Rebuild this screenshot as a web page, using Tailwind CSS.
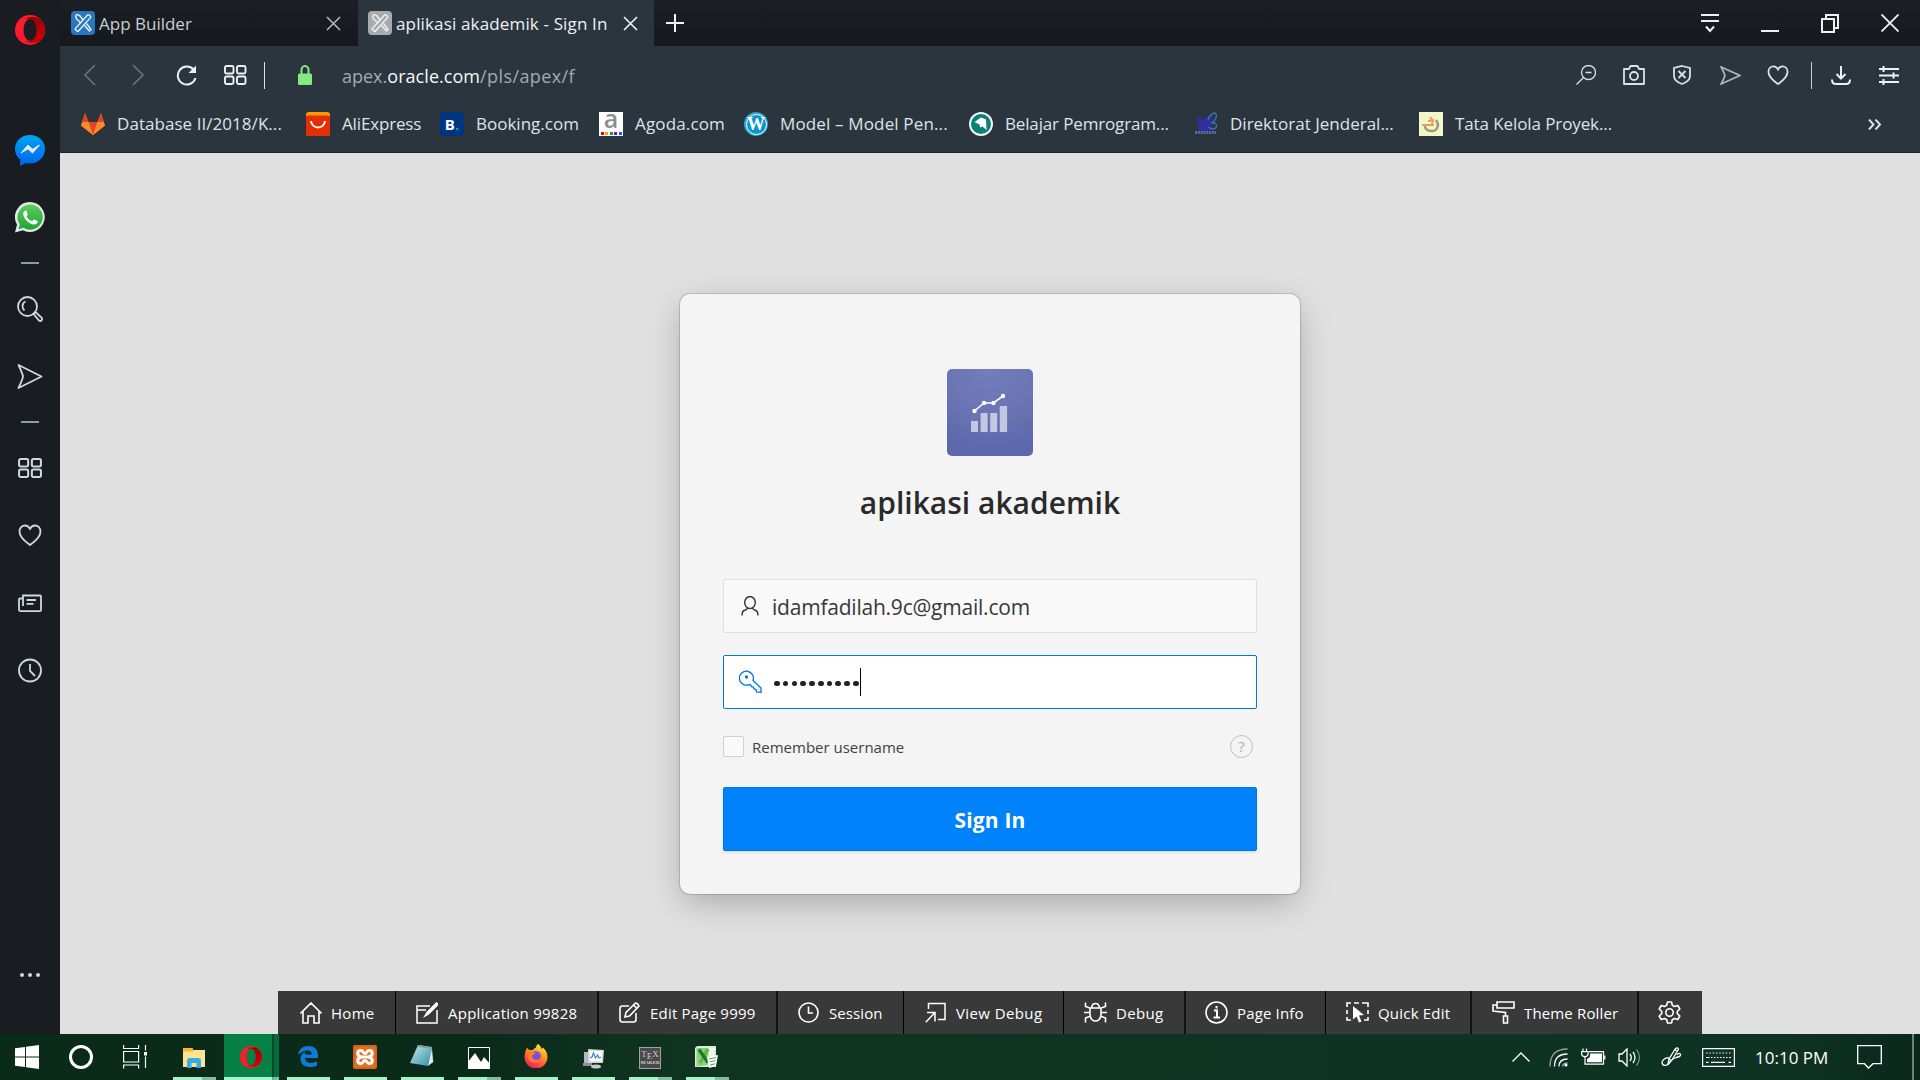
<!DOCTYPE html>
<html lang="id">
<head>
<meta charset="utf-8">
<title>aplikasi akademik - Sign In</title>
<script src="https://cdn.jsdelivr.net/npm/@tailwindcss/browser@4"></script>
</head>
<body class="flex h-[1080px] w-[1920px] flex-col overflow-hidden bg-[#e0e0e0] font-['Open_Sans',sans-serif]">
<svg class="absolute h-0 w-0" aria-hidden="true">
  <defs>
    <linearGradient id="opA" x1="0" y1="0" x2="0" y2="1"><stop offset="0" stop-color="#ff1b2d"/><stop offset="1" stop-color="#fa1a2c"/></linearGradient>
    <linearGradient id="opB" x1="0" y1="0" x2="0" y2="1"><stop offset="0" stop-color="#9c0000"/><stop offset="1" stop-color="#d0000c"/></linearGradient>
    <linearGradient id="msg" x1="0" y1="0" x2="0" y2="1"><stop offset="0" stop-color="#00a6f2"/><stop offset="1" stop-color="#0062ee"/></linearGradient>
    <linearGradient id="wa" x1="0" y1="0" x2="0" y2="1"><stop offset="0" stop-color="#5ccb5f"/><stop offset="1" stop-color="#1fa634"/></linearGradient>
    <linearGradient id="np" x1="0" y1="0" x2="1" y2="1"><stop offset="0" stop-color="#c6e9ee"/><stop offset="1" stop-color="#2e8fa5"/></linearGradient>
    <linearGradient id="ff" x1="0.8" y1="0" x2="0.3" y2="1"><stop offset="0" stop-color="#fff04a"/><stop offset="0.4" stop-color="#ff9a1e"/><stop offset="0.75" stop-color="#ff4a3d"/><stop offset="1" stop-color="#e5206c"/></linearGradient>
    <g id="apex"><g fill="none" stroke="#f2f5f7" stroke-width="1.300"><rect x="-2" y="-10" width="4" height="20" rx="1" transform="translate(12 12) rotate(42)"/><path d="M4.500 4.500l1.500-1 3 1.300 3 4.200M4.500 4.500l1 3.500 4.500 4M13.500 14.500l5 5.500 1.500-1.500-4.500-6"/></g></g>
    <g id="opera"><ellipse cx="15" cy="15" rx="15" ry="15" fill="url(#opA)"/><path d="M10 4.500C13 1.500 20 .5 25 4A14.800 14.800 0 0 1 25 26C20 29.500 13 28.500 10 25.500 14 28 20.500 25 20.500 15S14 2 10 4.500z" fill="url(#opB)"/></g>
    <g id="grid"><rect x="1" y="1" width="8.500" height="7.500" rx="1.500"/><rect x="13" y="1" width="8.500" height="7.500" rx="1.500"/><rect x="1" y="11.500" width="8.500" height="7.500" rx="1.500"/><rect x="13" y="11.500" width="8.500" height="7.500" rx="1.500"/></g>
    <path id="heart" d="M12 21C8 18 1.500 14 1.500 7.500 1.500 4 4 1.500 7 1.500c2.200 0 4 1.300 5 3.300 1-2 2.800-3.300 5-3.300 3 0 5.500 2.500 5.500 6C22.500 14 16 18 12 21z"/>
    <path id="send" d="M1.500 1.500L24.500 13 1.500 24.500C5 17 6 14 6 13 6 12 5 9 1.500 1.500z"/>
  </defs>
</svg>

<div class="flex h-[1034px]">
  <!-- Sidebar -->
  <aside class="flex w-[60px] shrink-0 flex-col items-center bg-[#191c21] pt-[15px] text-[#cfd8de]">
    <svg class="h-[30px] w-[30px]" viewBox="0 0 30 30"><use href="#opera"/><ellipse cx="15" cy="15" rx="6.500" ry="11" fill="#191c21"/></svg>
    <svg class="mt-[90px] h-[31px] w-[30px]" viewBox="0 0 30 31"><path d="M15 0C6.500 0 0 6 0 14c0 4.500 2 8 5.200 10.500V31l5.300-3c1.500.4 3 .5 4.500.5 8.500 0 15-6.300 15-14.500S23.500 0 15 0z" fill="url(#msg)"/><path d="M6 18l7-8 4.500 4.200L24.500 10 17.500 18 13 13.800z" fill="#e8eef2" stroke="#e8eef2"/></svg>
    <svg class="mt-[36px] h-[31px] w-[30px]" viewBox="0 0 30 31"><path d="M15 0a15 15 0 1 1-7.200 28.300L0 30.500l2-8A15 15 0 0 1 15 0z" fill="#e3e8e6"/><path d="M15 2.500a12.600 12.600 0 1 1-6.500 23.300l-5 1.500 1.300-5A12.600 12.600 0 0 1 15 2.500z" fill="url(#wa)"/><path d="M10.500 8.500c-1.500.5-2.500 2-2.200 4 .8 5 6 9.500 11 10 2 0 3.500-1.500 3.500-3.300l-3.800-2-2 2.100c-3-1.200-4.300-2.500-5.500-5l1.300-1.700-1.300-4z" fill="#fff"/></svg>
    <div class="mt-[29px] h-[2px] w-[18px] bg-[#8b9dab]"></div>
    <svg class="mt-[32px] h-[26px] w-[26px]" viewBox="0 0 26 26" fill="none" stroke="currentColor" stroke-width="1.800"><circle cx="10.500" cy="10.500" r="9.500"/><path d="M8.500 5.500C5 6.800 4.500 12 7.500 14.500M16.500 18l5.500 6.500c2 1.500 4-1 2.500-2.800L18.500 16z"/></svg>
    <svg class="mt-[41px] h-[27px] w-[26px]" viewBox="0 0 26 26" fill="none" stroke="currentColor" stroke-width="1.800" stroke-linejoin="round"><use href="#send"/></svg>
    <div class="mt-[31px] h-[2px] w-[18px] bg-[#8b9dab]"></div>
    <svg class="mt-[35px] h-[20px] w-[24px]" viewBox="0 0 22.500 20" preserveAspectRatio="none" fill="none" stroke="currentColor" stroke-width="1.900"><use href="#grid"/></svg>
    <svg class="mt-[46px] h-[22px] w-[24px]" viewBox="0 0 24 22" fill="none" stroke="currentColor" stroke-width="1.800"><use href="#heart"/></svg>
    <svg class="mt-[48px] h-[18px] w-[24px]" viewBox="0 0 24 18" fill="none" stroke="currentColor" stroke-width="1.800"><path d="M5 12V1.500h17q1 0 1 1v13.600q0 1-1 1H2.500q-1.500 0-1.500-1.500V5.500q0-1 1-1h2M8.500 6h9.500M8.500 9.800h7"/></svg>
    <svg class="mt-[46px] h-[25px] w-[24px]" viewBox="0 0 24 25" fill="none" stroke="currentColor" stroke-width="1.800"><circle cx="12" cy="12.500" r="11"/><path d="M12 6v7l5 5"/></svg>
    <div class="mt-[290px] flex gap-1"><i class="h-1 w-1 rounded-full bg-current"></i><i class="h-1 w-1 rounded-full bg-current"></i><i class="h-1 w-1 rounded-full bg-current"></i></div>
  </aside>

  <div class="flex w-[1860px] flex-col">
    <!-- Tab strip -->
    <header class="flex h-[46px] items-center bg-gradient-to-b from-[#1c2026] to-[#15181c] text-[17px]">
      <div class="flex h-full w-[298px] items-center pl-[11px] text-[#c9ced1]">
        <svg class="h-6 w-6 rounded bg-[#2878c0]" viewBox="0 0 24 24"><use href="#apex"/></svg>
        <span class="ml-1 w-[227px] pt-[2px] whitespace-nowrap">App Builder</span>
        <svg class="h-[15px] w-[15px]" viewBox="0 0 15 15" stroke="#b5bbbf" stroke-width="1.500"><path d="M1 1l13 13M14 1L1 14"/></svg>
      </div>
      <div class="flex h-full w-[296px] items-center bg-[#2b353e] pl-[10px] text-[#eef1f2]">
        <svg class="h-6 w-6 rounded bg-[#a7abad]" viewBox="0 0 24 24"><use href="#apex"/></svg>
        <span class="ml-1 w-[227px] pt-[2px] whitespace-nowrap tracking-[0.150px]">aplikasi akademik - Sign In</span>
        <svg class="h-[15px] w-[15px]" viewBox="0 0 15 15" stroke="#f0f3f4" stroke-width="1.600"><path d="M1 1l13 13M14 1L1 14"/></svg>
      </div>
      <svg class="ml-[12px] h-[18px] w-[18px]" viewBox="0 0 18 18" stroke="#f0f3f4" stroke-width="2"><path d="M9 0v18M0 9h18"/></svg>
      <div class="ml-auto mr-[21px] flex items-center text-[#eef1f2]">
        <svg class="h-[19px] w-[18px]" viewBox="0 0 18 19" fill="none" stroke="currentColor" stroke-width="2"><path d="M0 1h18M0 7h18M5 12.500l4 4.500 4-4.500"/></svg>
        <svg class="ml-[42px] h-[19px] w-[18px]" viewBox="0 0 18 19" stroke="currentColor" stroke-width="2"><path d="M0 17h18"/></svg>
        <svg class="ml-[42px] h-[19px] w-[18px]" viewBox="0 0 18 19" fill="none" stroke="currentColor" stroke-width="2"><path d="M1 5h12v13H1zM5 5V1h12v13h-4"/></svg>
        <svg class="ml-[42px] h-[18px] w-[18px]" viewBox="0 0 18 18" stroke="currentColor" stroke-width="1.800"><path d="M.5.5l17 17M17.500.5l-17 17"/></svg>
      </div>
    </header>

    <!-- Address bar -->
    <div class="flex h-[58px] items-center bg-[#2b353e] text-[#dbe1e4]">
      <svg class="ml-6 h-[22px] w-[12px]" viewBox="0 0 12 22" fill="none" stroke="#67727b" stroke-width="1.700"><path d="M11 1L1 11l10 10"/></svg>
      <svg class="ml-9 h-[22px] w-[12px]" viewBox="0 0 12 22" fill="none" stroke="#67727b" stroke-width="1.700"><path d="M1 1l10 10L1 21"/></svg>
      <svg class="ml-[32px] h-[21px] w-[21px]" viewBox="0 0 21 21" fill="none" stroke="#eef1f2" stroke-width="2"><path d="M17.500 4.500A9 9 0 1 0 19.500 13"/><path d="M20 .5V8h-7.500z" fill="#eef1f2" stroke="none"/></svg>
      <svg class="ml-[27px] h-[20px] w-[22.500px]" viewBox="0 0 22.500 20" fill="none" stroke="#eef1f2" stroke-width="1.900"><use href="#grid"/></svg>
      <div class="ml-[17px] h-[27px] w-[1.500px] bg-[#dbe1e4]"></div>
      <svg class="ml-[33px] h-[20px] w-[14px]" viewBox="0 0 14 20"><path d="M3.500 9V5a3.500 4 0 0 1 7 0v4" fill="none" stroke="#86ea82" stroke-width="2"/><rect y="8.500" width="14" height="11.500" rx="1.500" fill="#86ea82"/></svg>
      <div class="ml-[30px] flex whitespace-nowrap pt-[3px] text-[18px] text-[#a3aaae]"><span>apex.</span><span class="tracking-[0.050px] text-[#f4f6f7]">oracle.com</span><span class="tracking-[0.400px]">/pls/apex/f</span></div>
      <div class="ml-auto mr-[21px] flex items-center">
        <svg class="h-[20px] w-[20px]" viewBox="0 0 20 20" fill="none" stroke="currentColor" stroke-width="1.300"><circle cx="12.500" cy="7.500" r="7"/><path d="M9.500 7.500h6M7.500 12.500L.5 19.500"/></svg>
        <svg class="ml-[27px] h-[20px] w-[22px]" viewBox="0 0 22 20" fill="none" stroke="currentColor" stroke-width="1.800"><path d="M1 4h5l1.500-3h7L16 4h5v15H1z" stroke-linejoin="round"/><circle cx="11" cy="11" r="4"/></svg>
        <svg class="ml-[28px] h-[20px] w-[18px]" viewBox="0 0 18 20" fill="none" stroke="currentColor" stroke-width="1.800"><path d="M9 1l8 2v8c0 4-4 6.500-8 8-4-1.500-8-4-8-8V3zM5.500 6l7 7M12.500 6l-7 7"/></svg>
        <svg class="ml-[29px] h-[19px] w-[21px]" viewBox="0 0 26 26" preserveAspectRatio="none" fill="none" stroke="#aab3b9" stroke-width="2.300"><use href="#send"/></svg>
        <svg class="ml-[26px] h-[20px] w-[22px]" viewBox="0 0 24 22" fill="none" stroke="currentColor" stroke-width="2"><use href="#heart"/></svg>
        <div class="ml-[22px] h-[27px] w-px bg-[#c6cdd1]"></div>
        <svg class="ml-[19px] h-[19px] w-[20px]" viewBox="0 0 20 19" fill="none" stroke="#eef1f2" stroke-width="2"><path d="M10 0v12M5.500 8l4.500 4.500L14.500 8M1 13.500q0 4.500 4 4.500h10q4 0 4-4.500"/></svg>
        <svg class="ml-[28px] h-[19px] w-[20px]" viewBox="0 0 20 19" fill="none" stroke="#eef1f2" stroke-width="2"><path d="M0 3h20M0 9.500h20M0 16h20M4.500 0v6M14.500 6.500v6M4.500 13v6"/></svg>
      </div>
    </div>

    <!-- Bookmarks -->
    <div class="flex h-[49px] border-b border-[#1c232a] bg-[#2b353e] pb-[8px] pl-[21px] text-[17px] whitespace-nowrap text-[#dfe3e5]">
      <div class="flex w-[225px] items-center gap-3"><svg class="h-6 w-6" viewBox="0 0 24 24"><path d="M12 23L0 13.500 4 1l3.500 9h9L20 1l4 12.500z" fill="#fc6d26"/><path d="M12 23L7.500 10h9z" fill="#e24329"/><path d="M12 23L0 13.500 1.500 10h6zM12 23l12-9.500-1.500-3.500h-6z" fill="#fc8a2b"/><path d="M4 1l3.500 9h-6zM20 1l2.500 9h-6z" fill="#e24329"/></svg><span class="tracking-[0.050px]">Database II/2018/K...</span></div>
      <div class="flex w-[134px] items-center gap-3"><svg class="h-6 w-6" viewBox="0 0 24 24"><rect width="24" height="24" rx="3" fill="#ff9a00"/><path d="M0 5q0-1.500 2-1.500h20q2 0 2 1.500v16q0 3-3 3H3q-3 0-3-3z" fill="#e62e04"/><path d="M5 9c1 8.500 13 8.500 14 0" fill="none" stroke="#fff" stroke-width="2"/></svg><span class="tracking-[-0.150px]">AliExpress</span></div>
      <div class="flex w-[159px] items-center gap-3"><div class="flex h-6 w-6 items-center justify-center rounded-[3px] bg-[#003580] text-[15px] font-bold text-white">B<span class="text-[#009fe3]">.</span></div><span>Booking.com</span></div>
      <div class="flex w-[145px] items-center gap-3"><div class="flex h-6 w-6 flex-col items-center bg-white"><span class="h-[18px] text-[25px] leading-[13px] font-semibold text-[#8f8f8f]">a</span><div class="mt-[2px] flex gap-[1.500px]"><i class="h-[3px] w-[3px] bg-red-600"></i><i class="h-[3px] w-[3px] bg-amber-500"></i><i class="h-[3px] w-[3px] bg-green-600"></i><i class="h-[3px] w-[3px] bg-purple-700"></i><i class="h-[3px] w-[3px] bg-blue-600"></i></div></div><span class="tracking-[0.150px]">Agoda.com</span></div>
      <div class="flex w-[225px] items-center gap-3"><div class="flex h-6 w-6 items-center justify-center rounded-full bg-[#2ba5d3]"><div class="flex h-[21px] w-[21px] items-center justify-center rounded-full border-[1.500px] border-white bg-[#0d95c9] font-['Liberation_Serif',serif] text-[18px] leading-none font-bold text-white">W</div></div><span class="tracking-[0.150px]">Model – Model Pen...</span></div>
      <div class="flex w-[225px] items-center gap-3"><svg class="h-6 w-6" viewBox="0 0 24 24"><circle cx="12" cy="12" r="12" fill="#eef5f4"/><circle cx="12" cy="12" r="10" fill="#0c7f76"/><path d="M5.500 10L12 5.500l5 2 .5 10.500-4-3.500-2.500 1-.5-3z" fill="#fff"/></svg><span class="tracking-[-0.150px]">Belajar Pemrogram...</span></div>
      <div class="flex w-[225px] items-center gap-3"><svg class="h-6 w-6" viewBox="0 0 24 24"><path d="M2 5l7 3 5-4 4-1 1 5-3 4 6 5-7 3H3l2-5z" fill="#2e2f9e"/><path d="M14 8C15 4 18 1 21 1c3 1 1 8-4 10 4-1 6 1 5.500 3.500S18 18 14 15" fill="none" stroke="#3f79a8" stroke-width="1.300"/><path d="M1 20.500h21" stroke="#5b6c99" stroke-width="3" stroke-dasharray="2 .8"/></svg><span>Direktorat Jenderal...</span></div>
      <div class="flex items-center gap-3"><svg class="h-6 w-6 bg-[#f3f6c6]" viewBox="0 0 24 24" fill="none"><path d="M17 8c4 5 1 11-4 11-4 0-7-2-7-5" stroke="#9a9a86" stroke-width="2.500"/><path d="M3 13h12M9 9l6-1M11 5l3 4-2 5" stroke="#ed9a5e" stroke-width="2"/></svg><span class="tracking-[-0.100px]">Tata Kelola Proyek...</span></div>
      <svg class="ml-auto mr-[38px] mt-[15px] h-[11px] w-[14px]" viewBox="0 0 14 11" fill="none" stroke="#dfe3e5" stroke-width="1.900"><path d="M1 .5l4.500 5L1 10.500M7.500.5l4.500 5-4.500 5"/></svg>
    </div>

    <!-- Login page -->
    <main class="flex grow flex-col items-center justify-between pt-[141px]">
      <section class="flex h-[600px] w-[620px] flex-col items-center rounded-[10px] bg-[#f4f4f4] pt-[75px] text-[#262626] shadow-[0_0_0_1px_rgba(0,0,0,0.14),0_10px_34px_-4px_rgba(0,0,0,0.28)]">
        <div class="flex h-[87px] w-[86px] items-center justify-center rounded-[5px] bg-[radial-gradient(circle_at_50%_0%,#747db9,#6a74b4_50%,#5b68ac_85%)]">
          <svg class="mr-[2px] h-[40px] w-[37px]" viewBox="0 0 37 40"><path d="M0 28h7v11H0zM9.600 20h7v19h-7zM19.200 20h7v19h-7zM28.800 13h7.300v26h-7.300z" fill="#c3c7e2"/><g fill="#fff"><circle cx="3.500" cy="18" r="2.200"/><circle cx="13" cy="10" r="2.200"/><circle cx="22.500" cy="10" r="2.200"/><circle cx="32" cy="3" r="2.200"/></g><path d="M3.500 18l9.500-8h9.500L32 3" fill="none" stroke="#fff" stroke-width="1.600"/></svg>
        </div>
        <h1 class="mt-[26px] h-[41px] text-[30px] leading-[41px] font-semibold text-[#2a2a2a]">aplikasi akademik</h1>
        <div class="mt-[56px] flex h-[54px] w-[534px] items-center rounded-[2px] border border-[#dfdfdf] bg-[#f9f9f9] pl-[17px]">
          <svg class="h-[20px] w-[18px]" viewBox="0 0 18 20" fill="none" stroke="#333" stroke-width="1.400"><ellipse cx="9" cy="6.500" rx="5.300" ry="6"/><path d="M1 19.500q0-5 3.500-5.500l2.500-2M17 19.500q0-5-3.500-5.500L11 12"/></svg>
          <span class="ml-[13px] pt-[3px] text-[21px] tracking-[-0.220px] text-[#383838]">idamfadilah.9c@gmail.com</span>
        </div>
        <div class="mt-[22px] flex h-[54px] w-[534px] items-center rounded-[2px] border border-[#0076df] bg-white pl-[15px]">
          <svg class="mb-[2px] h-[23px] w-[23px]" viewBox="0 0 23 23" fill="none" stroke="#0076df" stroke-width="1.300"><path d="M14 10.500A7 7 0 1 0 9 15l2.500-.3 1 2 2 .3.500 2 2 .5.500 2.500 4.500.300V18z"/><circle cx="7.500" cy="7" r="1" fill="#0076df"/></svg>
          <div class="ml-[12px] flex gap-[3.200px] pt-[3px]"><i class="h-[5.600px] w-[5.600px] rounded-full bg-[#222]"></i><i class="h-[5.600px] w-[5.600px] rounded-full bg-[#222]"></i><i class="h-[5.600px] w-[5.600px] rounded-full bg-[#222]"></i><i class="h-[5.600px] w-[5.600px] rounded-full bg-[#222]"></i><i class="h-[5.600px] w-[5.600px] rounded-full bg-[#222]"></i><i class="h-[5.600px] w-[5.600px] rounded-full bg-[#222]"></i><i class="h-[5.600px] w-[5.600px] rounded-full bg-[#222]"></i><i class="h-[5.600px] w-[5.600px] rounded-full bg-[#222]"></i><i class="h-[5.600px] w-[5.600px] rounded-full bg-[#222]"></i><i class="h-[5.600px] w-[5.600px] rounded-full bg-[#222]"></i></div>
          <div class="ml-px h-[28px] w-px bg-black"></div>
        </div>
        <div class="mt-[26px] flex h-[23px] w-[534px] items-center">
          <div class="h-[21px] w-[21px] rounded-[2px] border border-[#d0d0d0] bg-[#f9f9f9]"></div>
          <span class="ml-[8px] pt-[2px] text-[15px] text-[#404040]">Remember username</span>
          <div class="mr-[4px] mb-[1px] ml-auto flex h-[23px] w-[23px] items-center justify-center rounded-full border border-[#bdbdbd] text-[15px] text-[#b0b0b0]">?</div>
        </div>
        <button class="mt-[29px] flex h-[64px] w-[534px] items-center justify-center rounded-[2px] border border-[#0076df] bg-[#0083fa] pt-[4px] text-[21px] font-bold tracking-[0.200px] text-white shadow-[0_2px_2px_rgba(0,0,0,0.08)]">Sign In</button>
      </section>

      <!-- Developer toolbar -->
      <nav class="flex h-[43px] w-[1424px] items-stretch bg-[#393939] text-[15px] whitespace-nowrap text-white [&_span]:pt-[2px]">
        <div class="flex w-[118px] items-center border-r border-black pl-[22px]"><svg class="h-[22px] w-[22px]" viewBox="0 0 22 22" fill="none" stroke="currentColor" stroke-width="1.600"><path d="M.5 11.500L11 1l10.500 10.500M3 9.500V21h5v-7h6v7h5V9.500"/></svg><span class="ml-[9px] tracking-[0.300px]">Home</span></div>
        <div class="flex w-[203px] items-center border-r-2 border-[#111] pl-[20px]"><svg class="h-[22px] w-[22px]" viewBox="0 0 22 22" fill="none" stroke="currentColor" stroke-width="1.500"><path d="M14 4H1v17h20V8M1 8h9"/><path d="M9 14l2-3.500L20.500 1 22 2.500 12.500 12z" fill="#fff"/></svg><span class="ml-[10px] tracking-[0.250px]">Application 99828</span></div>
        <div class="flex w-[179px] items-center border-r-2 border-[#111] pl-[20px]"><svg class="h-[21px] w-[21px]" viewBox="0 0 21 21" fill="none" stroke="currentColor" stroke-width="1.600"><path d="M10 4H3.500Q1 4 1 6.500v11Q1 20 3.500 20h11q2.500 0 2.500-2.500V11M6 15l1-4.500L16.500 1q2 0 3.500 3L10.500 14z"/><path d="M14.500 3l3.500 3.500"/></svg><span class="ml-[10px] tracking-[0.200px]">Edit Page 9999</span></div>
        <div class="flex w-[126px] items-center border-r border-black pl-[20px]"><svg class="h-[21px] w-[21px]" viewBox="0 0 21 21" fill="none" stroke="currentColor" stroke-width="1.600"><circle cx="10.500" cy="10.500" r="9.500"/><path d="M10.500 4.500v6.500h4.500"/></svg><span class="ml-[10px] tracking-[0.100px]">Session</span></div>
        <div class="flex w-[160px] items-center border-r border-black pl-[21px]"><svg class="h-[21px] w-[21px]" viewBox="0 0 21 21" fill="none" stroke="currentColor" stroke-width="1.500"><path d="M3.500 7V1.500h16.500v16h-7M.8 20.200L9.500 11M2 10.500h8v9"/></svg><span class="ml-[10px] tracking-[0.400px]">View Debug</span></div>
        <div class="flex w-[122px] items-center border-r-2 border-[#111] pl-[20px]"><svg class="h-[21px] w-[23px]" viewBox="0 0 23 21" fill="none" stroke="currentColor" stroke-width="1.600"><path d="M6 6h11v7q-1 6-5.500 6T6 13zM7.500 6Q8 1.500 11.500 1.500T15.500 6M6 6L1.500 4.500V.5M17 6l4.500-1.500V.5M6 10.500H0M17 10.500h6M6.500 14l-5 2v4.500M16.500 14l5 2v4.500"/></svg><span class="ml-[9px] tracking-[0.300px]">Debug</span></div>
        <div class="flex w-[140px] items-center border-r border-black pl-[19px]"><svg class="h-[23px] w-[23px]" viewBox="0 0 23 23" fill="none" stroke="currentColor" stroke-width="1.600"><circle cx="11.500" cy="11.500" r="10.500"/><path d="M9 9.500h3v7M8.500 16.500h6.500M11.500 5v2.500" stroke-width="2"/></svg><span class="ml-[9px] tracking-[0.150px]">Page Info</span></div>
        <div class="flex w-[146px] items-center border-r-2 border-[#111] pl-[20px]"><svg class="h-[23px] w-[23px]" viewBox="0 0 23 23"><path d="M1 6V2h4M8 2h5M16 2h6v4M22 9v4M22 16v3h-4M1 9v4M1 16v3h4" fill="none" stroke="#fff" stroke-width="1.600"/><path d="M7 5l11 9-5 .5 2.500 6-2.500 1-2.500-6L7 18.500z" fill="#fff"/></svg><span class="ml-[9px] tracking-[0.200px]">Quick Edit</span></div>
        <div class="flex w-[167px] items-center border-r-2 border-[#111] pl-[20px]"><svg class="h-[23px] w-[23px]" viewBox="0 0 23 23" fill="none" stroke="currentColor" stroke-width="1.600"><path d="M5 1h17v6H5zM5 4H1v6l12.500 1.500V15M11.500 15h4v7h-4z"/></svg><span class="ml-[9px] tracking-[0.150px]">Theme Roller</span></div>
        <div class="flex grow items-center pl-[19px]"><svg class="h-[23px] w-[23px]" viewBox="0 0 23 23" fill="none" stroke="currentColor" stroke-width="1.600" stroke-linejoin="round"><path d="M9.500 1h4l.8 3.300 2.200 1.200 3.300-1 2 3.500-2.500 2.300v2.400l2.500 2.300-2 3.500-3.300-1-2.200 1.200-.8 3.300h-4l-.8-3.300-2.200-1.200-3.300 1-2-3.500 2.500-2.300v-2.400L1.200 8l2-3.500 3.300 1 2.200-1.200z"/><circle cx="11.500" cy="11.500" r="3.700"/></svg></div>
      </nav>
    </main>
  </div>
</div>

<!-- Taskbar -->
<footer class="flex h-[46px] bg-[linear-gradient(90deg,#0a2a1a_0%,#0a2a1a_24%,#103422_36%,#0f3322_93%,#09281a_100%)]">
  <div class="flex w-[173px] items-center pl-[15px]">
    <svg class="h-6 w-6" viewBox="0 0 24 24" fill="#fff"><path d="M0 3.300L10 2v9.400H0zM11 1.700L24 0v11.400H11zM0 12.500h10V22L0 20.700zM11 12.500h13V24l-13-1.700z"/></svg>
    <div class="ml-[30px] h-6 w-6 rounded-full border-[3px] border-white"></div>
    <svg class="ml-[30px] h-6 w-6" viewBox="0 0 24 24" fill="none" stroke="#fff" stroke-width="1.200"><path d="M.6 0v3.500h15V0M.6 6.500h15v10.500h-15zM.6 23.500v-3.500h15v3.500M22.500 0v5.500M22.500 11.500V23"/><path d="M21 7h3v3.500h-3z" fill="#fff" stroke="none"/></svg>
  </div>
  <div class="flex w-[51px] flex-col justify-end"><svg class="mb-[9px] ml-[10px] h-5 w-[22px]" viewBox="0 0 22 20"><path d="M0 0h9l1.500 2H22v17H0z" fill="#ffe394"/><path d="M0 0h9.500l1 3.500H0z" fill="#f5b82e"/><path d="M4 20v-7q0-3 3-3h8q3 0 3 3v7h-4.500v-5h-5v5z" fill="#35ade4"/></svg><div class="flex h-[3px]"><i class="w-[29px] bg-[#a6f2cd]"></i><i class="w-[14px] bg-[#84bda2]"></i></div></div>
  <div class="flex w-[55px]">
    <div class="flex w-12 flex-col items-center justify-end bg-[#078045]"><svg class="mb-[9px] ml-[6px] h-[22px] w-[22px]" viewBox="0 0 30 30"><use href="#opera"/><ellipse cx="15" cy="15" rx="6.500" ry="11.500" fill="#078045"/></svg><div class="h-[3px] w-12 bg-[#a6f2cd]"></div></div>
    <div class="flex w-[2px] flex-col justify-end bg-[#044a2a]"><i class="h-[3px] bg-[#6fa98d]"></i></div>
    <div class="flex w-[5px] flex-col justify-end bg-[#046b39]"><i class="h-[3px] bg-[#84bda2]"></i></div>
  </div>
  <div class="flex w-[65px] flex-col justify-end pl-2"><svg class="mb-[10px] ml-[11px] h-[21px] w-5" viewBox="0 0 20 21"><path d="M0 9C1 3 5 0 10.500 0 17 0 20 4.500 20 9v3H7c0 3.500 3 5 6 5 2 0 4-.5 6-1.700V19.500c-2 1-4.500 1.500-7 1.500C6.500 21 2.500 18 2.500 13c0-3.500 2-6 5-7.500C6 6.500 7.300 8 7.200 8.500h6.500c0-2.500-1.500-4-4-4C6 4.500 2.500 6.300 0 9z" fill="#0c7cd8"/></svg><i class="h-[3px] w-[43px] bg-[#a6f2cd]"></i></div>
  <div class="flex w-[57px] flex-col justify-end"><svg class="mb-[8px] ml-[9px] h-6 w-6" viewBox="0 0 24 24"><rect width="24" height="24" rx="2" fill="#e9701f"/><rect x="1" y="1" width="22" height="22" rx="2" fill="none" stroke="#c9560f"/><path d="M9 12h6M9 12c-6-1-5-7-1-6.500 2.500.5 2 3 4 3s1.500-2.500 4-3c4-.5 5 5.500-1 6.500 6 1 5 7 1 6.500-2.500-.5-2-3-4-3s-1.500 2.500-4 3C4 19 3 13 9 12z" fill="none" stroke="#fff" stroke-width="3"/></svg><i class="h-[3px] w-[43px] bg-[#a6f2cd]"></i></div>
  <div class="flex w-[57px] flex-col justify-end"><svg class="mb-[9px] ml-[9px] h-6 w-6" viewBox="0 0 24 24"><path d="M21 4l2.500 14-5 3z" fill="#c08a45"/><path d="M8 1l14 2-4 19-18-3z" fill="url(#np)"/><path d="M8 1l14 2-.5 2-14-2z" fill="#8d9a9c"/><path d="M22 4l1 14-5 4z" fill="#d9eef0"/></svg><i class="h-[3px] w-[43px] bg-[#a6f2cd]"></i></div>
  <div class="flex w-[57px] flex-col justify-end"><svg class="mb-[8px] ml-[10px] h-[22px] w-[22px]" viewBox="0 0 22 22"><path d="M.5.5h21v21H.5z" fill="none" stroke="#fff"/><path d="M0 22v-7l7-9 6 9 3-5 6 7v5z" fill="#fff"/></svg><div class="flex h-[3px]"><i class="w-[29px] bg-[#a6f2cd]"></i><i class="w-[14px] bg-[#84bda2]"></i></div></div>
  <div class="flex w-[57px] flex-col justify-end"><svg class="mb-[9px] ml-[9px] h-6 w-6" viewBox="0 0 24 24"><path d="M14 0c2 1 3 3 3.500 5L19 3.500c3 3 4.500 6 4.500 9.500A11.500 11.500 0 0 1 .5 13C.5 9 2 6 3 3.500L5 6h4c1-1.500 1.500-2 3-2.500 0-1.500 1-3 2-3.500z" fill="url(#ff)"/><circle cx="12" cy="12" r="4.800" fill="#7a4fe0"/><path d="M2.500 8c4-1.500 7-.5 9 1.500l-3.500 2c0 4 4.500 6 8.500 3.500-2.500 4.500-10 4.500-12 0z" fill="#ff7a2a"/></svg><i class="h-[3px] w-[43px] bg-[#a6f2cd]"></i></div>
  <div class="flex w-[57px] flex-col justify-end"><svg class="mb-[8px] ml-[11px] h-5 w-[21px]" viewBox="0 0 21 20"><path d="M1 3h7v13H1z" fill="#b4b9bb"/><path d="M0 14h9v3H0z" fill="#8d9395"/><path d="M5 0l16 1-1 13H5z" fill="#cfd4d6"/><path d="M6.500 1.500l13 .8-1 10H6.500z" fill="#fff"/><path d="M7 9l2-1 1.500-4 2 5 2-3 1.500 3 2-1" fill="none" stroke="#2f8ac6" stroke-width="1.200"/><ellipse cx="13" cy="17.500" rx="5" ry="2" fill="#c7cbcc"/></svg><i class="h-[3px] w-[43px] bg-[#a6f2cd]"></i></div>
  <div class="flex w-[57px] flex-col justify-end"><div class="mb-[8px] ml-[10px] flex h-[22px] w-[22px] flex-col items-center justify-center border border-[#a2a2a2] bg-[#4a4a4a] font-['Liberation_Serif',serif] text-[#cfcfcf]"><span class="text-[9px] leading-[8px]">T<span class="relative top-[2px]">E</span>X</span><span class="mt-[2px] text-[5px] leading-[6px] font-bold">MAKER</span></div><div class="flex h-[3px]"><i class="w-[29px] bg-[#a6f2cd]"></i><i class="w-[14px] bg-[#84bda2]"></i></div></div>
  <div class="flex w-[57px] flex-col justify-end"><svg class="mb-[9px] ml-[9px] h-[22px] w-[23px]" viewBox="0 0 23 22"><path d="M2 0h19v21H0V2z" fill="#d9ecd4"/><path d="M1.500 2h12v17l-12 1.500z" fill="#8fcf7c"/><path d="M13.500 1.500h6v9h-6z" fill="#eef7ea"/><path d="M13 3L5 17" stroke="#5fb84a" stroke-width="3.500"/><path d="M4 3.500l9 13" stroke="#1c7a2c" stroke-width="3.500"/><path d="M12 11l11-2-2 11-7 2z" fill="#fff"/><path d="M14 13l7-1.500M14.500 16l6-1.500M15 19l5-1.200" stroke="#4fa050"/></svg><div class="flex h-[3px]"><i class="w-[29px] bg-[#a6f2cd]"></i><i class="w-[14px] bg-[#84bda2]"></i></div></div>
  <div class="ml-auto flex items-center text-white">
    <svg class="h-[10px] w-[18px]" viewBox="0 0 18 10" fill="none" stroke="currentColor" stroke-width="1.300"><path d="M.5 9.500L9 1l8.500 8.500"/></svg>
    <svg class="ml-[19px] h-[19px] w-[19px]" viewBox="0 0 19 19" fill="none" stroke="currentColor" stroke-width="1.300"><path d="M1 18.500Q1 1 18.500 1" stroke="#93a79c"/><path d="M5.500 18.500Q5.500 6 18.500 6M10 18.500Q10 11 18.500 11"/><path d="M13.500 18.500q0-3 5-3.500" stroke="#93a79c"/><circle cx="17" cy="17" r="1.600" fill="currentColor" stroke="none"/></svg>
    <svg class="ml-[13px] h-[18px] w-[25px]" viewBox="0 0 25 18" fill="none" stroke="currentColor" stroke-width="1.200"><path d="M8 3.600h14.500v12.500H5M23.800 7.500v4M2 .5v3M5.500.5v3M.6 3.600h6.500v2.500q0 2.500-3.200 2.500T.6 6.100zM4 8.500v7.600h3"/><path d="M9 5.500h12v8.700H6V11q3-1 3-3z" fill="#fff" stroke="none"/></svg>
    <svg class="ml-[12px] h-[19px] w-[23px]" viewBox="0 0 23 19" fill="none" stroke="currentColor" stroke-width="1.300"><path d="M1 6h3l5-5v17l-5-5H1zM12 6q2.500 3.500 0 7M15 4q4 5.500 0 11"/><path d="M18.500 1.500q6 8 0 16" stroke="#6f8a7c"/></svg>
    <svg class="ml-[20px] h-[20px] w-[21px]" viewBox="0 0 21 20" fill="none" stroke="currentColor" stroke-width="1.300"><path d="M7 16.500L8 12 14.500 1.500q2-1.500 3 .5L11 13zM14 2.500l2.500 2M8 12l2.500 1.500M8 11c-4-.5-7 2-7 5 1 3.500 6 3 8-.5 1-2 3-4 6-5 3-.5 5-1.500 4.500-3S17 6 16 8"/></svg>
    <svg class="ml-[20px] h-[19px] w-[33px]" viewBox="0 0 33 19" fill="none" stroke="currentColor" stroke-width="1.200"><path d="M.6.6h31.800v17.800H.6z"/><path d="M4 5h25" stroke-dasharray="1.500 1.800"/><path d="M4 9.500h25" stroke-dasharray="3.500 1.500 1.500 1.500 1.500 1.500 1.500 1.500 1.500 1.500 1.500 1.500 1.500 1.500"/><path d="M4 14.300h2.500M9 14.300h14M26.500 14.300H29"/></svg>
    <span class="ml-[20px] w-[74px] pt-[1px] text-[17px] whitespace-nowrap">10:10 PM</span>
    <svg class="ml-[28px] h-[24px] w-[25px]" viewBox="0 0 25 24" fill="none" stroke="currentColor" stroke-width="1.300"><path d="M.7.7h23.600v18H16L11.500 23 7.500 18.700H.7z"/></svg>
    <div class="mr-[6px] ml-[30px] h-[46px] w-[2px] bg-[#6c8276]"></div>
  </div>
</footer>
</body>
</html>
